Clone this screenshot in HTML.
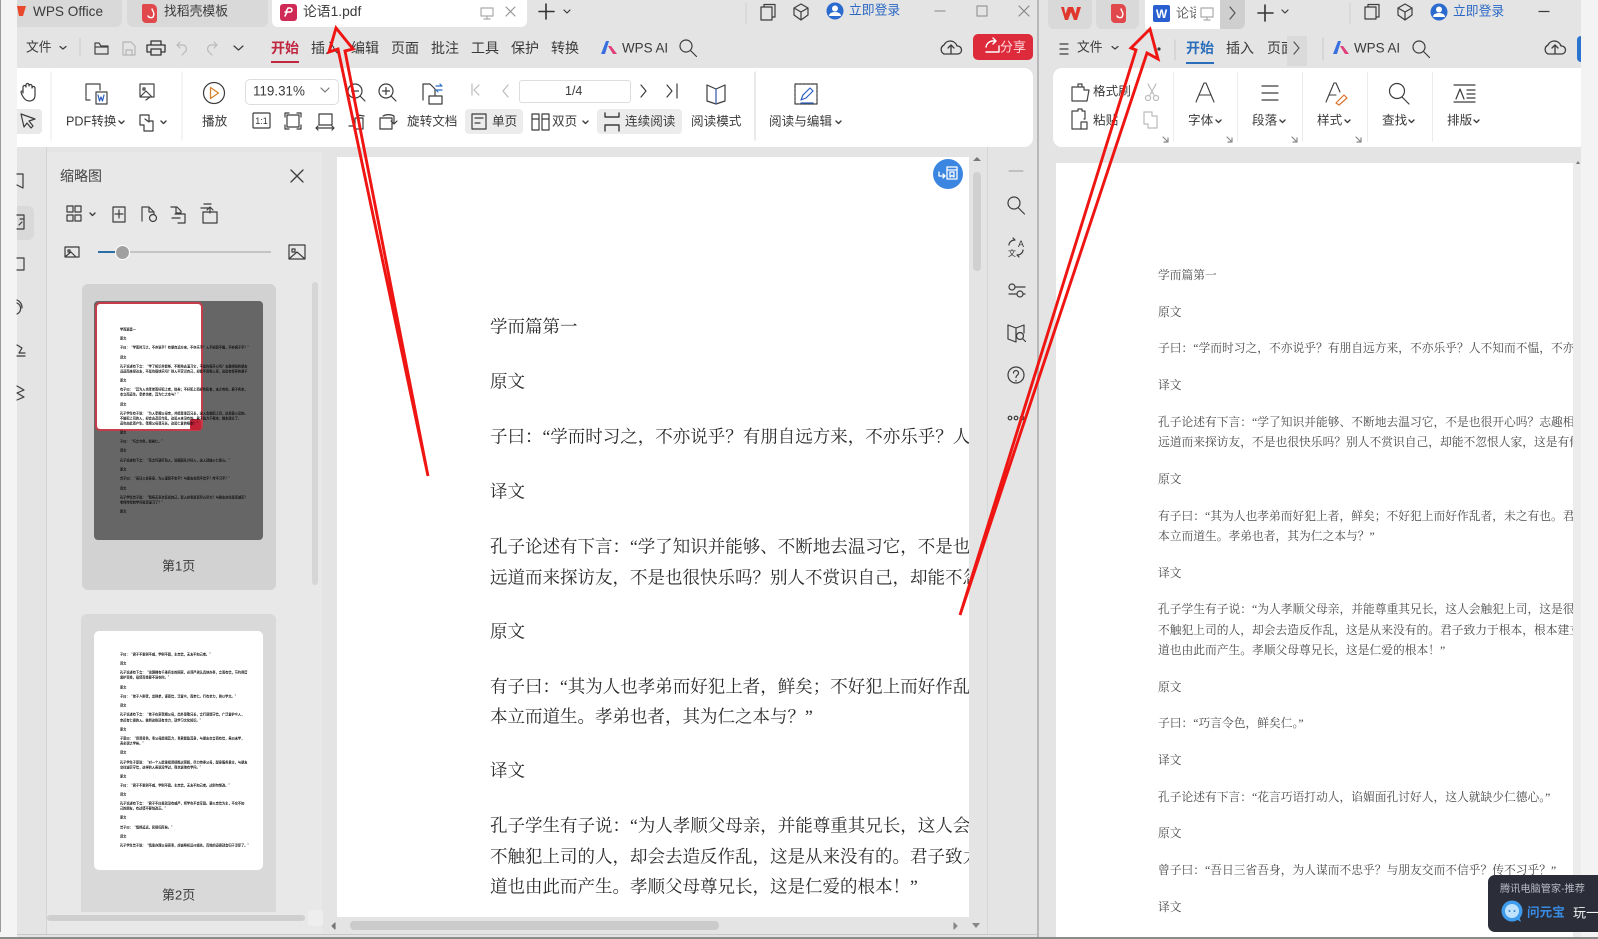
<!DOCTYPE html>
<html lang="zh-CN">
<head>
<meta charset="utf-8">
<title>WPS</title>
<style>
html,body{margin:0;padding:0;width:1598px;height:939px;overflow:hidden;background:#e4e4e4}
body{position:relative;font-family:"Liberation Sans","Noto Sans CJK SC",sans-serif;color:#333;filter:blur(.35px)}
.b{position:absolute}
.t{position:absolute;white-space:nowrap;transform:translateY(-50%);line-height:1;font-size:13px;color:#3a3a3a}
.m{font-size:14px}
.doc{position:absolute;background:#fff;overflow:hidden;font-family:"Liberation Serif","Noto Serif CJK SC",serif}
.doc div{position:absolute;white-space:nowrap;transform:translateY(-50%);line-height:1;margin-top:2px}
#d1 div{left:153px;font-size:17.5px;color:#2a2a2a}
#d2 div{left:102px;font-size:11.75px;color:#4a4a4a}
.th{position:absolute;left:120px;white-space:nowrap;font-size:3.2px;line-height:1;color:#111;font-family:"Noto Sans CJK SC",sans-serif;font-weight:700;transform:translateY(-50%)}
svg{position:absolute;left:0;top:0}
</style>
</head>
<body>
<!-- left strip -->
<div class="b" style="left:0;top:0;width:17px;height:939px;background:#f4f4f4"></div>
<div class="b" style="left:0;top:0;width:1px;height:932px;background:#9a9a9a"></div>
<!-- left window chrome -->
<div class="b" style="left:17px;top:0;width:1020px;height:936px;background:#e4e4e4"></div>
<div class="b" style="left:1037px;top:0;width:2px;height:937px;background:#b8b8b8"></div>
<!-- tabs -->
<div class="b" style="left:17px;top:0;width:105px;height:27px;background:#d9d9d9;border-radius:0 0 6px 0"></div>
<div class="b" style="left:127px;top:0;width:141px;height:27px;background:#d9d9d9;border-radius:0 0 6px 6px"></div>
<div class="b" style="left:272px;top:0;width:255px;height:27px;background:#fff;border-radius:0 0 6px 6px"></div>
<div class="t" style="left:33px;top:12px;font-size:13.6px">WPS Office</div>
<div class="t" style="left:164px;top:12px;font-size:12.8px">找稻壳模板</div>
<div class="t" style="left:303px;top:12px;font-size:13.8px">论语1.pdf</div>
<div class="t" style="left:849px;top:11px;color:#2b68c4;font-size:12.8px">立即登录</div>
<!-- menu row -->
<div class="t" style="left:26px;top:48px;font-size:12.8px">文件</div>
<div class="t m" style="left:271px;top:48px;color:#c02640;font-weight:700">开始</div>
<div class="b" style="left:271px;top:61px;width:28px;height:2px;background:#c02640"></div>
<div class="t m" style="left:311px;top:48px">插入</div>
<div class="t m" style="left:351px;top:48px">编辑</div>
<div class="t m" style="left:391px;top:48px">页面</div>
<div class="t m" style="left:431px;top:48px">批注</div>
<div class="t m" style="left:471px;top:48px">工具</div>
<div class="t m" style="left:511px;top:48px">保护</div>
<div class="t m" style="left:551px;top:48px">转换</div>
<div class="t" style="left:622px;top:48px;font-size:13.4px">WPS AI</div>
<div class="b" style="left:973px;top:34px;width:60px;height:26px;background:#dd2b3b;border-radius:5px"></div>
<div class="t" style="left:1000px;top:47px;color:#ffd9dc;font-size:13px">分享</div>
<!-- ribbon -->
<div class="b" style="left:17px;top:68px;width:1016px;height:79px;background:#fff;border-radius:0 9px 9px 0"></div>
<div class="b" style="left:17px;top:109px;width:25px;height:25px;background:#e9e9e9;border-radius:0 4px 4px 0"></div>
<div class="b" style="left:465px;top:109px;width:58px;height:25px;background:#ececec;border-radius:4px"></div>
<div class="b" style="left:597px;top:109px;width:85px;height:25px;background:#ececec;border-radius:4px"></div>
<div class="b" style="left:245px;top:79px;width:92px;height:24px;border:1px solid #ddd;border-radius:5px"></div>
<div class="b" style="left:519px;top:80px;width:110px;height:21px;border:1px solid #ddd;border-radius:3px"></div>
<div class="t" style="left:253px;top:91px;font-size:13.4px">119.31%</div>
<div class="t" style="left:565px;top:91px;font-size:12.5px">1/4</div>
<div class="t" style="left:66px;top:122px;font-size:12.6px">PDF转换</div>
<div class="t" style="left:202px;top:122px;font-size:12.6px">播放</div>
<div class="t" style="left:407px;top:122px;font-size:12.6px">旋转文档</div>
<div class="t" style="left:492px;top:122px;font-size:12.6px">单页</div>
<div class="t" style="left:552px;top:122px;font-size:12.6px">双页</div>
<div class="t" style="left:625px;top:122px;font-size:12.6px">连续阅读</div>
<div class="t" style="left:691px;top:122px;font-size:12.6px">阅读模式</div>
<div class="t" style="left:769px;top:122px;font-size:12.6px">阅读与编辑</div>
<!-- side nav + thumbnail panel -->
<div class="b" style="left:17px;top:206px;width:17px;height:34px;background:#d9d9d9;border-radius:0 6px 6px 0"></div>
<div class="b" style="left:46px;top:147px;width:1px;height:788px;background:#d4d4d4"></div>
<div class="b" style="left:47px;top:152px;width:275px;height:783px;background:#e8e8e8"></div>
<div class="t" style="left:60px;top:176px;font-size:14px;color:#444">缩略图</div>
<div class="b" style="left:98px;top:251px;width:173px;height:2px;background:#c4c4c4"></div>
<div class="b" style="left:98px;top:251px;width:18px;height:2px;background:#2a6ea8"></div>
<div class="b" style="left:115px;top:245px;width:13px;height:13px;border-radius:50%;background:#a0a0a0;border:1.5px solid #fff;box-sizing:content-box"></div>
<div class="b" style="left:312px;top:282px;width:6px;height:303px;background:#d6d6d6;border-radius:3px"></div>
<!-- thumb 1 -->
<div class="b" style="left:82px;top:284px;width:194px;height:306px;background:#d2d2d2;border-radius:6px"></div>
<div class="b" style="left:94px;top:301px;width:169px;height:239px;background:#666;border-radius:4px"></div>
<div class="b" style="left:95px;top:302px;width:104px;height:125px;background:#fff;border:2px solid #c63c4a;border-radius:5px"></div>
<div class="b" style="left:190px;top:419px;width:11px;height:11px;background:#c32136;border-radius:2px"></div>
<div class="t" style="left:162px;top:566px;font-size:13px">第1页</div>
<div class="th" style="top:329px">学而篇第一</div>
<div class="th" style="top:338px">原文</div>
<div class="th" style="top:347px">子曰：“学而时习之，不亦说乎？有朋自远方来，不亦乐乎？人不知而不愠，不亦君子乎？”</div>
<div class="th" style="top:357px">译文</div>
<div class="th" style="top:366px">孔子论述有下言：“学了知识并能够、不断地去温习它，不是也很开心吗？志趣相投的朋友</div>
<div class="th" style="top:371px">远道而来探访友，不是也很快乐吗？别人不赏识自己，却能不怨恨人家，这是有修养的君子</div>
<div class="th" style="top:380px">原文</div>
<div class="th" style="top:389px">有子曰：“其为人也孝弟而好犯上者，鲜矣；不好犯上而好作乱者，未之有也。君子务本，</div>
<div class="th" style="top:394px">本立而道生。孝弟也者，其为仁之本与？”</div>
<div class="th" style="top:404px">译文</div>
<div class="th" style="top:413px">孔子学生有子说：“为人孝顺父母亲，并能尊重其兄长，这人会触犯上司，这是很少见的。</div>
<div class="th" style="top:418px">不触犯上司的人，却会去造反作乱，这是从来没有的。君子致力于根本，根本建立了，</div>
<div class="th" style="top:423px">道也由此而产生。孝顺父母尊兄长，这是仁爱的根本！”</div>
<div class="th" style="top:432px">原文</div>
<div class="th" style="top:441px">子曰：“巧言令色，鲜矣仁。”</div>
<div class="th" style="top:450px">译文</div>
<div class="th" style="top:460px">孔子论述有下言：“花言巧语打动人，谄媚面孔讨好人，这人就缺少仁德心。”</div>
<div class="th" style="top:469px">原文</div>
<div class="th" style="top:478px">曾子曰：“吾日三省吾身，为人谋而不忠乎？与朋友交而不信乎？传不习乎？”</div>
<div class="th" style="top:488px">译文</div>
<div class="th" style="top:497px">孔子学生曾子说：“我每天多次反省自己，替人办事是否尽心尽力？与朋友交往是否诚实？</div>
<div class="th" style="top:502px">老师传授的学问是否温习了？”</div>
<div class="th" style="top:511px">原文</div>
<!-- thumb 2 -->
<div class="b" style="left:81px;top:614px;width:195px;height:298px;background:#d9d9d9;border-radius:6px 6px 0 0"></div>
<div class="b" style="left:94px;top:631px;width:169px;height:239px;background:#fff;border-radius:5px"></div>
<div class="t" style="left:162px;top:895px;font-size:13px">第2页</div>
<div class="th" style="top:654px">子曰：“君子不重则不威，学则不固，主忠信，无友不如己者。”</div>
<div class="th" style="top:663px">译文</div>
<div class="th" style="top:672px">孔子论述有下言：“治理拥有千乘兵车的国家，必须严肃认真地办事，言而有信，节约用度</div>
<div class="th" style="top:677px">爱护百姓，役使百姓要不误农时。”</div>
<div class="th" style="top:687px">原文</div>
<div class="th" style="top:696px">子曰：“弟子入则孝，出则弟，谨而信，泛爱众，而亲仁。行有余力，则以学文。”</div>
<div class="th" style="top:705px">译文</div>
<div class="th" style="top:714px">孔子论述有下言：“弟子在家孝顺父母，出外尊敬兄长，言行谨慎守信，广泛爱护众人，</div>
<div class="th" style="top:720px">亲近有仁德的人。做到这些还有余力，就学习文化知识。”</div>
<div class="th" style="top:729px">原文</div>
<div class="th" style="top:738px">子夏曰：“贤贤易色，事父母能竭其力，事君能致其身，与朋友交言而有信，虽曰未学，</div>
<div class="th" style="top:743px">吾必谓之学矣。”</div>
<div class="th" style="top:752px">译文</div>
<div class="th" style="top:762px">孔子学生子夏说：“对一个人能重视贤德胜过容貌，尽力侍奉父母，献身服务君主，与朋友</div>
<div class="th" style="top:767px">交往诚实守信，这样的人虽说没学过，我也说他有学问。”</div>
<div class="th" style="top:776px">原文</div>
<div class="th" style="top:785px">子曰：“君子不重则不威，学则不固。主忠信，无友不如己者。过则勿惮改。”</div>
<div class="th" style="top:794px">译文</div>
<div class="th" style="top:803px">孔子论述有下言：“君子不庄重就没有威严，所学也不会牢固。要以忠信为主，不交不如</div>
<div class="th" style="top:808px">己的朋友，有过错不要怕改正。”</div>
<div class="th" style="top:817px">原文</div>
<div class="th" style="top:827px">曾子曰：“慎终追远，民德归厚矣。”</div>
<div class="th" style="top:836px">译文</div>
<div class="th" style="top:845px">孔子学生曾子说：“慎重办理父母丧事，虔诚祭祀远代祖先，百姓的道德就会归于淳厚了。”</div>
<!-- panel hscroll -->
<div class="b" style="left:47px;top:915px;width:258px;height:6px;background:#cfcfcf;border-radius:3px"></div>
<div class="b" style="left:308px;top:910px;width:15px;height:16px;background:#eee;border-radius:3px"></div>
<!-- doc 1 -->
<div class="doc" id="d1" style="left:337px;top:157px;width:632px;height:760px">
<div style="top:168px">学而篇第一</div>
<div style="top:223px">原文</div>
<div style="top:278px">子曰：“学而时习之，不亦说乎？有朋自远方来，不亦乐乎？人不知而不愠，不亦君子乎？”</div>
<div style="top:333px">译文</div>
<div style="top:388px">孔子论述有下言：“学了知识并能够、不断地去温习它，不是也很开心吗？志趣相投的朋友</div>
<div style="top:419px">远道而来探访友，不是也很快乐吗？别人不赏识自己，却能不忽恨人家，这是有修养的君子</div>
<div style="top:473px">原文</div>
<div style="top:528px">有子曰：“其为人也孝弟而好犯上者，鲜矣；不好犯上而好作乱者，未之有也。君子务本，</div>
<div style="top:558px">本立而道生。孝弟也者，其为仁之本与？”</div>
<div style="top:612px">译文</div>
<div style="top:667px">孔子学生有子说：“为人孝顺父母亲，并能尊重其兄长，这人会触犯上司，这是很少见的。</div>
<div style="top:698px">不触犯上司的人，却会去造反作乱，这是从来没有的。君子致力于根本，根本建立了，</div>
<div style="top:728px">道也由此而产生。孝顺父母尊兄长，这是仁爱的根本！”</div>
</div>
<div class="b" style="left:933px;top:159px;width:30px;height:30px;border-radius:50%;background:#3a86e0"></div>
<!-- scrollbars left doc -->
<div class="b" style="left:973px;top:172px;width:8px;height:99px;background:#d0d0d0;border-radius:4px"></div>
<div class="b" style="left:350px;top:921px;width:369px;height:9px;background:#cbcbcb;border-radius:4px"></div>
<div class="b" style="left:987px;top:147px;width:1px;height:788px;background:#d6d6d6"></div>
<div class="b" style="left:17px;top:934px;width:1020px;height:1px;background:#c8c8c8"></div>

<!-- RIGHT WINDOW -->
<div class="b" style="left:1039px;top:0;width:542px;height:937px;background:#e4e4e4"></div>
<div class="b" style="left:1581px;top:0;width:17px;height:939px;background:#f3f3f3"></div>
<div class="b" style="left:1048px;top:0;width:44px;height:29px;background:#d9d9d9;border-radius:0 0 6px 6px"></div>
<div class="b" style="left:1096px;top:0;width:43px;height:29px;background:#d9d9d9;border-radius:0 0 6px 6px"></div>
<div class="b" style="left:1145px;top:0;width:75px;height:29px;background:#fff"></div>
<div class="b" style="left:1220px;top:0;width:25px;height:29px;background:#cfcfcf;border-radius:0 0 6px 0"></div>
<div class="t" style="left:1176px;top:13px;font-size:13px;width:20px;overflow:hidden;color:#666">论语</div>
<div class="t" style="left:1453px;top:12px;color:#2b68c4;font-size:12.8px">立即登录</div>
<div class="t" style="left:1077px;top:48px;font-size:12.8px">文件</div>
<div class="t m" style="left:1186px;top:48px;color:#2a6ebb;font-weight:700">开始</div>
<div class="b" style="left:1186px;top:62px;width:28px;height:2px;background:#2a6ebb"></div>
<div class="t m" style="left:1226px;top:48px">插入</div>
<div class="t m" style="left:1267px;top:48px;width:21px;overflow:hidden">页面</div>
<div class="b" style="left:1287px;top:36px;width:20px;height:30px;background:#dadada"></div>
<div class="t" style="left:1354px;top:48px;font-size:13.4px">WPS AI</div>
<div class="b" style="left:1577px;top:36px;width:4px;height:26px;background:#2a73cf;border-radius:4px 0 0 4px"></div>
<div class="b" style="left:1053px;top:68px;width:528px;height:79px;background:#fff;border-radius:9px 0 0 9px"></div>
<div class="b" style="left:1173px;top:72px;width:1px;height:70px;background:#ececec"></div>
<div class="b" style="left:1237px;top:72px;width:1px;height:70px;background:#ececec"></div>
<div class="b" style="left:1302px;top:72px;width:1px;height:70px;background:#ececec"></div>
<div class="b" style="left:1367px;top:72px;width:1px;height:70px;background:#ececec"></div>
<div class="b" style="left:1432px;top:72px;width:1px;height:70px;background:#ececec"></div>
<div class="t" style="left:1093px;top:92px;font-size:12.6px">格式刷</div>
<div class="t" style="left:1093px;top:121px;font-size:12.6px">粘贴</div>
<div class="t" style="left:1188px;top:121px;font-size:12.6px">字体</div>
<div class="t" style="left:1252px;top:121px;font-size:12.6px">段落</div>
<div class="t" style="left:1317px;top:121px;font-size:12.6px">样式</div>
<div class="t" style="left:1382px;top:121px;font-size:12.6px">查找</div>
<div class="t" style="left:1447px;top:121px;font-size:12.6px">排版</div>
<!-- doc 2 -->
<div class="doc" id="d2" style="left:1056px;top:163px;width:517px;height:775px">
<div style="top:111px">学而篇第一</div>
<div style="top:148px">原文</div>
<div style="top:184px">子曰：“学而时习之，不亦说乎？有朋自远方来，不亦乐乎？人不知而不愠，不亦君子乎？”</div>
<div style="top:221px">译文</div>
<div style="top:258px">孔子论述有下言：“学了知识并能够、不断地去温习它，不是也很开心吗？志趣相投的朋友</div>
<div style="top:278px">远道而来探访友，不是也很快乐吗？别人不赏识自己，却能不忽恨人家，这是有修养的君子</div>
<div style="top:315px">原文</div>
<div style="top:352px">有子曰：“其为人也孝弟而好犯上者，鲜矣；不好犯上而好作乱者，未之有也。君子务本，</div>
<div style="top:372px">本立而道生。孝弟也者，其为仁之本与？”</div>
<div style="top:409px">译文</div>
<div style="top:445px">孔子学生有子说：“为人孝顺父母亲，并能尊重其兄长，这人会触犯上司，这是很少见的。</div>
<div style="top:466px">不触犯上司的人，却会去造反作乱，这是从来没有的。君子致力于根本，根本建立了，</div>
<div style="top:486px">道也由此而产生。孝顺父母尊兄长，这是仁爱的根本！”</div>
<div style="top:523px">原文</div>
<div style="top:559px">子曰：“巧言令色，鲜矣仁。”</div>
<div style="top:596px">译文</div>
<div style="top:633px">孔子论述有下言：“花言巧语打动人，谄媚面孔讨好人，这人就缺少仁德心。”</div>
<div style="top:669px">原文</div>
<div style="top:706px">曾子曰：“吾日三省吾身，为人谋而不忠乎？与朋友交而不信乎？传不习乎？”</div>
<div style="top:743px">译文</div>
</div>
<div class="b" style="left:1573px;top:163px;width:8px;height:775px;background:#ececec"></div>
<!-- popup -->
<div class="b" style="left:1488px;top:875px;width:110px;height:57px;background:#2b2e39;border-radius:7px 0 0 7px"></div>
<div class="t" style="left:1500px;top:890px;font-size:10.2px;color:#b9bcc4">腾讯电脑管家-推荐</div>
<div class="t" style="left:1527px;top:913px;font-size:12.6px;color:#3a8be2;font-weight:700">问元宝</div>
<div class="t" style="left:1573px;top:913px;font-size:13px;color:#f2f2f2;width:25px;overflow:hidden">玩一</div>
<div class="b" style="left:0;top:937px;width:1598px;height:2px;background:#8a8a8a"></div>

<!-- ICONS -->
<svg width="1598" height="939" viewBox="0 0 1598 939" fill="none" stroke="#3c3c3c" stroke-width="1.2" stroke-linecap="round" stroke-linejoin="round" style="pointer-events:none">
<!-- tab icons -->
<path d="M17 6L26 6 23 16 19 16z" fill="#e8492c" stroke="none"/>
<path d="M143 4h9a5 5 0 0 1 5 5v11a3 3 0 0 1-3 3h-8a4 4 0 0 1-4-4V5z" fill="#e0484c" stroke="none"/>
<path d="M152 9c1 3 3 4 1 8-1 1-4 1-5-1" stroke="#fff" stroke-width="1.4"/>
<rect x="280" y="4" width="17" height="17" rx="3" fill="#cf2a55" stroke="none"/>
<path d="M285 16l2-4h3a2 2 0 0 0 0-4h-2l-2 4h-1" stroke="#fff" stroke-width="1.5"/>
<path d="M481 8h12v8h-12zM487 16v3M484 19h6" stroke="#aaa"/>
<path d="M506 7l9 9M515 7l-9 9" stroke="#999"/>
<path d="M546 4v15M539 11.500h15" stroke="#333" stroke-width="1.6"/>
<path d="M564 10l3 3 3-3"/>
<path d="M746 3v20" stroke="#d4d4d4"/>
<path d="M761 7h11v13h-11zM764 7v-2.500h11v12.500h-3"/>
<path d="M801 4l7 4v7l-7 5-7-5V8zM794 8l7 4 7-4M801 12v8"/>
<circle cx="835" cy="11" r="8.500" fill="#2b6bd0" stroke="none"/>
<circle cx="835" cy="8.500" r="3" fill="#fff" stroke="none"/>
<path d="M829 16a6 4 0 0 1 12 0z" fill="#fff" stroke="none"/>
<path d="M935 11h10" stroke="#999"/>
<rect x="977" y="6" width="10" height="10" stroke="#999"/>
<path d="M1019 6l10 10M1029 6l-10 10" stroke="#888"/>
<!-- menu icons -->
<path d="M60 46.500l3 2.500 3-2.500"/>
<path d="M80 38v18" stroke="#d0d0d0"/>
<path d="M95 43v11h13l0-8h-7l-2-3zM95 47h13" stroke="#444"/>
<path d="M123 42h8l4 4v9h-12zM126 55v-5h6v5" stroke="#b5b5b5"/>
<path d="M151 45v-4h10v4M150 52h-3v-7h18v7h-3M151 49h10v6h-10z" stroke="#333" stroke-width="1.3"/>
<path d="M180 42l-3 3 3 3M177 45h6a4 4 0 0 1 2 7l-3 3" stroke="#bbb"/>
<path d="M214 42l3 3-3 3M217 45h-6a4 4 0 0 0-2 7l3 3" stroke="#bbb"/>
<path d="M234 46l4.500 4 4.500-4"/>
<path d="M601 54l5-13h3l-4 13z" fill="#3a6fe0" stroke="none"/>
<path d="M608 46l5 8h4l-6-8z" fill="#e0407a" stroke="none"/>
<circle cx="686" cy="46" r="6"/><path d="M690.500 50.500l6 6"/>
<path d="M946 54h-2a5 5 0 0 1 0-9 7 7 0 0 1 13 1 4 4 0 0 1 1 8h-3zM951 53v-7M948 48l3-3 3 3" stroke-width="1.3"/>
<path d="M986 47a7 7 0 0 1 6-6h3M993 38l3 3-3 3M999 46v6h-13" stroke="#fff" stroke-width="1.4"/>
<!-- ribbon left -->
<path d="M23 93v-6a1.500 1.500 0 0 1 3 0v-2a1.500 1.500 0 0 1 3 0v1a1.500 1.500 0 0 1 3 0v2a1.500 1.500 0 0 1 3 0v7c0 4-2 6-6 6-3 0-5-2-7-6l-1-3a1.500 1.500 0 0 1 2-1z"/>
<path d="M21 114l14 5-6 2 4 5-2 2-4-5-3 4z"/>
<path d="M51 72v68" stroke="#ececec"/>
<path d="M86 96V84h14v6M90 100h-4v-3M96 92h11v12H96z" stroke="#444"/>
<path d="M98 95l1.500 6 1.500-4 1.500 4 1.500-6" stroke="#2c5fc0"/>
<path d="M140 84h14v13h-14zM143 88h2v2h-2zM141 96l5-5 6 6M146 100l4-3" stroke="#444"/>
<path d="M140 115h9v6h4v10h-9v-6h-4zM145 119l4 3"/>
<path d="M161 121l2.500 2.500 2.500-2.500" stroke-width="1.4"/>
<path d="M119 121l2.500 2.500 2.500-2.500" stroke-width="1.4"/>
<path d="M182 72v68" stroke="#ececec"/>
<circle cx="214" cy="93" r="10.500"/>
<path d="M210.500 87.500l8 5.500-8 5.500z" stroke="#d9822b" stroke-width="1.3"/>
<path d="M321 88l4 4 4-4" stroke="#777"/>
<circle cx="355" cy="91" r="7"/><path d="M360 96l5 5M351.500 91h7"/>
<circle cx="386" cy="91" r="7"/><path d="M391 96l5 5M382.500 91h7M386 87.500v7"/>
<path d="M423 100V84h7l5 5v6M429 96h13v8h-13z"/>
<path d="M436 86h6l-2-2M442 90h-6l2 2" stroke="#2c6fc0"/>
<rect x="253" y="113" width="17" height="15" rx="1"/>
<text x="261.500" y="124" font-size="9" fill="#333" stroke="none" text-anchor="middle" font-family="Liberation Sans">1:1</text>
<path d="M287 115h12v12h-12zM285 117v-4h4M301 117v-4h-4M285 125v4h4M301 125v4h-4"/>
<path d="M319 114h13v11h-13zM316 128h18M316 128l2-2M316 128l2 2M334 128l-2-2M334 128l-2 2"/>
<path d="M355 118h8v11h-8zM349 126h4M358 115l6 1"/>
<path d="M380 118h12v11h-12zM383 116a8 5 0 0 1 11 0v7M391 121l3 3 3-3"/>
<path d="M472 114h14v15h-14zM475 118h8M475 123h5"/>
<path d="M472 90v-6M479 85l-5 5 5 5M472 85v10" stroke="#bbb"/>
<path d="M508 85l-5 6 5 6" stroke="#bbb"/>
<path d="M641 85l5 6-5 6M667 85l5 6-5 6M677 84v14"/>
<path d="M707 85l9 4 9-4v16l-9 3-9-3zM716 89v15"/>
<path d="M716 89v15" stroke="#4a6fc0"/>
<path d="M532 114h7v16h-7zM542 114h7v16h-7zM532 119h7M542 119h7"/>
<path d="M583 121l2.500 2.500 2.500-2.500" stroke-width="1.4"/>
<path d="M605 113v4h14v-4M605 131v-6h14v6" stroke-width="1.4"/>
<path d="M755 72v68" stroke="#ddd"/>
<path d="M795 84h22v20h-22z" stroke-dasharray="3 1"/>
<path d="M801 100l2-5 7-7 3 3-7 7zM801 103h12" stroke="#2c5fc0"/>
<path d="M836 121l2.500 2.500 2.500-2.500" stroke-width="1.4"/>
<!-- side nav -->
<path d="M17 174h6v14l-6-3"/>
<path d="M17 215h7v14h-7M20 219h3M19 225l3-3"/>
<path d="M17 258h7v12h-7"/>
<path d="M17 303a6 6 0 0 1 0 11M17 300a8 8 0 0 1 5 8"/>
<path d="M17 345l5 3-3 5h6M17 356h8"/>
<path d="M17 386l7 4-7 3 7 4-7 3"/>
<!-- thumb panel -->
<path d="M291 170l12 12M303 170l-12 12" stroke-width="1.3"/>
<path d="M67 206h6v6h-6zM75 206h6v6h-6zM67 215h6v6h-6zM75 215h6v6h-6z"/>
<path d="M90 213l2.500 2.500 2.500-2.500" stroke-width="1.4"/>
<path d="M113 207h12v15h-12zM119 210v8M115 214h8"/>
<path d="M142 221v-14h7l5 5v2M149 207v5h5" stroke="#444"/>
<circle cx="153" cy="218" r="3.500"/>
<path d="M171 207h6l4 4v2h-5v-6M175 214h10v9h-7M172 218h8"/>
<path d="M201 208h9M204 204h7M203 212h14v11h-14zM210 213v-5M207 210l3-3 3 3"/>
<path d="M65 247h14v10h-14zM68 250h2v2h-2zM66 256l5-4 5 5"/>
<path d="M289 245h16v14h-16zM292 249h3v3h-3zM290 258l7-6 8 7"/>
<!-- doc overlay btn -->
<path d="M947 167h10v12h-10zM947 170h10M950 172h4v5l-2-1.500-2 1.500zM939 172v4h6M943 174l2 2-2 2" stroke="#fff" stroke-width="1.3"/>
<!-- scroll arrows -->
<path d="M973 161l4-4 4 4z" fill="#777" stroke="none"/>
<path d="M335 923l-3 3 3 3z" fill="#777" stroke="#777"/>
<path d="M954 923l3 3-3 3z" fill="#888" stroke="#888"/>
<path d="M972 923l4 5 4-5z" fill="#888" stroke="none"/>
<path d="M1576 164l2-3 2 3z" fill="#777" stroke="none"/>
<!-- right tools -->
<path d="M1009 171h14" stroke="#aaa"/>
<circle cx="1014" cy="203" r="6"/><path d="M1018.500 208l6 6"/>
<path d="M1009 245a6 5 0 0 1 6-5l-2-2M1023 250a6 5 0 0 1-6 5l2 2"/>
<text x="1018" y="247" font-size="9" fill="#333" stroke="none" font-family="Liberation Sans">A</text>
<text x="1008" y="256" font-size="8" fill="#333" stroke="none" font-family="Noto Sans CJK SC">文</text>
<circle cx="1012" cy="287" r="3"/><path d="M1015 287h10M1009 294h8"/><circle cx="1020" cy="294" r="3"/><path d="M1023 294h2"/>
<path d="M1008 325l8 3 8-3v8M1008 325v14l8 3v-14"/>
<circle cx="1020" cy="336" r="3.500"/><path d="M1023 339l2.500 2.500"/>
<circle cx="1016" cy="375" r="8"/>
<path d="M1013.500 373a2.500 2.500 0 1 1 4 2c-1 .7-1.500 1-1.500 2.500M1016 380.500v.5"/>
<circle cx="1010" cy="418" r="1.800"/><circle cx="1016" cy="418" r="1.800"/><circle cx="1022" cy="418" r="1.800"/>
<!-- right tabs -->
<path d="M1061 7l4 13h3l3-8 3 8h3l4-13h-4l-1.500 7-2.500-7h-5l-2.500 7-1.500-7z" fill="#e0382c" stroke="none"/>
<path d="M1112 4h9a5 5 0 0 1 5 5v11a3 3 0 0 1-3 3h-8a4 4 0 0 1-4-4V5z" fill="#e0484c" stroke="none"/>
<path d="M1121 9c1 3 3 4 1 8-1 1-4 1-5-1" stroke="#fff" stroke-width="1.4"/>
<rect x="1153" y="5" width="17" height="17" rx="2" fill="#2a5fd0" stroke="none"/>
<text x="1161.500" y="18" font-size="12" font-weight="700" fill="#fff" stroke="none" text-anchor="middle" font-family="Liberation Sans">W</text>
<path d="M1201 8h12v9h-12zM1207 17v2M1204 20h6" stroke="#aaa"/>
<path d="M1230 7l5 6-5 6" stroke="#555"/>
<path d="M1265 5v16M1258 13h15" stroke="#333" stroke-width="1.6"/>
<path d="M1282 10l3 3 3-3"/>
<path d="M1350 3v20" stroke="#d4d4d4"/>
<path d="M1365 7h11v12h-11zM1368 7v-2.500h11v12.500h-3"/>
<path d="M1405 4l7 4v7l-7 5-7-5V8zM1398 8l7 4 7-4M1405 12v8"/>
<circle cx="1439" cy="12" r="8.500" fill="#2b6bd0" stroke="none"/>
<circle cx="1439" cy="9.500" r="3" fill="#fff" stroke="none"/>
<path d="M1433 17a6 4 0 0 1 12 0z" fill="#fff" stroke="none"/>
<path d="M1539 11.500h10"/>
<path d="M1060 44h8M1060 49h8M1060 54h8"/>
<path d="M1112 46.500l3 2.500 3-2.500"/>
<circle cx="1159" cy="49" r="1" fill="#333"/>
<path d="M1175 40v20" stroke="#ccc"/>
<path d="M1294 42l5 6-5 6" stroke="#555"/>
<path d="M1323 38v22" stroke="#ccc"/>
<path d="M1333 54l5-13h3l-4 13z" fill="#3a6fe0" stroke="none"/>
<path d="M1340 46l5 8h4l-6-8z" fill="#e0407a" stroke="none"/>
<circle cx="1419" cy="47" r="6"/><path d="M1423.500 51.500l6 6"/>
<path d="M1550 54h-2a5 5 0 0 1 0-9 7 7 0 0 1 13 1 4 4 0 0 1 1 8h-3zM1555 53v-7M1552 48l3-3 3 3" stroke-width="1.3"/>
<!-- right ribbon -->
<path d="M1072 87h12v3h5l-2 11h-15zM1078 87v-3h4v3" stroke="#444"/>
<path d="M1073 111h5v-2h4v2h3v8h-1M1072 111v18h9v-7h6v7h-6" stroke="#444"/>
<path d="M1148 84l6 11M1156 84l-6 11" stroke="#bbb"/><circle cx="1148" cy="98" r="2.500" stroke="#bbb"/><circle cx="1156" cy="98" r="2.500" stroke="#bbb"/>
<path d="M1144 112h8v4h5v12h-9v-4h-4z" stroke="#bbb"/>
<path d="M1196 102l8-19h2l8 19M1199 95h12" stroke-width="1.1"/>
<path d="M1262 86h16M1262 93h16M1262 100h16"/>
<path d="M1326 102l8-19h2l4 9M1329 95h7" stroke-width="1.1"/>
<path d="M1336 103l8-8 3 3-8 7z" stroke="#d9722b"/>
<circle cx="1397" cy="91" r="7.500"/><path d="M1402 97l7 7"/>
<path d="M1454 85h21M1454 102h21M1456 99l4-10 4 10M1467 90h8M1467 94h8M1467 98h8"/>
<path d="M1216 120l2.500 2.500 2.500-2.500M1280 120l2.500 2.500 2.500-2.500M1345 120l2.500 2.500 2.500-2.500M1409 120l2.500 2.500 2.500-2.500M1474 120l2.500 2.500 2.500-2.500" stroke-width="1.4"/>
<path d="M1163 137l5 5M1168 138v4h-4M1227 137l5 5M1232 138v4h-4M1292 137l5 5M1297 138v4h-4M1356 137l5 5M1361 138v4h-4" stroke="#888"/>
<!-- popup icon -->
<circle cx="1512" cy="911" r="10.500" fill="#3f9cec" stroke="none"/>
<path d="M1516 919l5 3-2-6z" fill="#3f9cec" stroke="none"/>
<circle cx="1512" cy="911" r="7" fill="#bfe2ff" stroke="none"/>
<circle cx="1509.500" cy="911" r="1" fill="#3f7cc0" stroke="none"/>
<circle cx="1514.500" cy="911" r="1" fill="#3f7cc0" stroke="none"/>
<!-- red arrows -->
<polygon points="428,476 338,49 329,52 336,28 353,49 345,51" fill="none" stroke="#ee1512" stroke-width="2.900" stroke-linejoin="miter"/>
<polygon points="960,615 1136,50 1131,48 1150,29 1158,59 1147,53" fill="none" stroke="#ee1512" stroke-width="2.900" stroke-linejoin="miter"/>
</svg>
</body>
</html>
